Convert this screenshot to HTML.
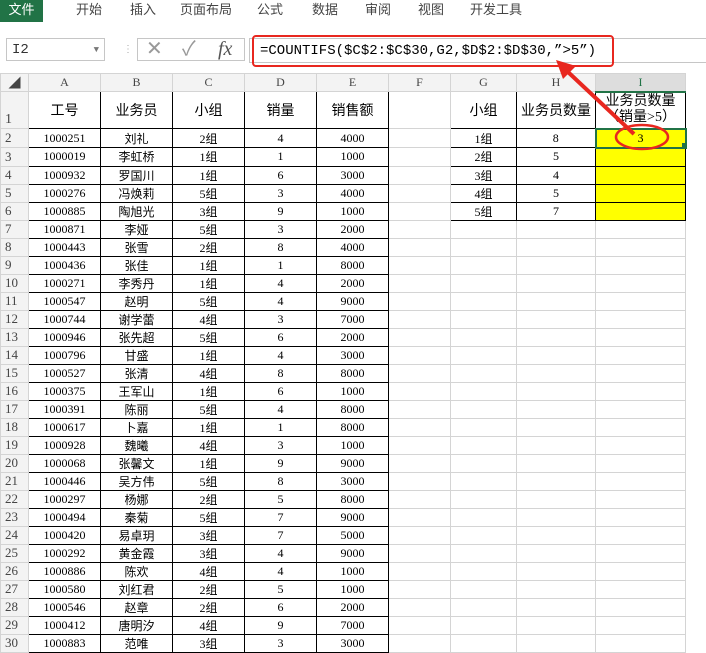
<!DOCTYPE html>
<html><head><meta charset="utf-8"><style>
body{margin:0;width:706px;height:653px;overflow:hidden;background:#fff;font-family:"Liberation Sans","Noto Sans CJK SC",sans-serif;position:relative}
.tab{position:absolute;top:0;height:22px;line-height:20px;font-size:13px;color:#444}
table{position:absolute;left:0;top:73px;width:718px;border-collapse:collapse;table-layout:fixed;font-family:"Liberation Serif","Noto Sans CJK SC",serif;font-size:12px}
td{border:1px solid #d4d4d4;height:17px;padding:0;text-align:center;white-space:nowrap;overflow:hidden;color:#000}
tr.h td{background:#f3f3f3;height:16px;color:#444;font-size:12px}
td.rn{background:#f3f3f3;color:#444;text-align:left;padding-left:4px;font-size:13px}
td.b{border:1px solid #000}
td.y{background:#ff0}
tr.r1 td{height:35px;font-size:14px}
</style></head><body>
<div class="tab" style="left:0;width:43px;background:#217346;color:#fff;text-align:center">文件</div>
<div class="tab" style="left:76px">开始</div>
<div class="tab" style="left:130px">插入</div>
<div class="tab" style="left:180px">页面布局</div>
<div class="tab" style="left:257px">公式</div>
<div class="tab" style="left:312px">数据</div>
<div class="tab" style="left:365px">审阅</div>
<div class="tab" style="left:418px">视图</div>
<div class="tab" style="left:470px">开发工具</div>
<div style="position:absolute;left:6px;top:38px;width:99px;height:23px;border:1px solid #c6c6c6;font:14px 'Liberation Mono',monospace;line-height:23px;padding-left:5px;box-sizing:border-box;color:#333">I2<span style="position:absolute;right:5px;font-size:9px;color:#777">▼</span></div>
<div style="position:absolute;top:44px;color:#aaa;font-size:10px;left:123px">⋮</div>
<div style="position:absolute;left:137px;top:38px;width:108px;height:23px;border:1px solid #c6c6c6;box-sizing:border-box;color:#999;font-size:20px;line-height:21px">
<span style="position:absolute;left:8px">✕</span><span style="position:absolute;left:44px">✓</span><span style="position:absolute;left:80px;font-family:'Liberation Serif',serif;font-style:italic;color:#555">fx</span></div>
<div style="position:absolute;left:249px;top:38px;width:457px;height:23px;border:1px solid #c6c6c6;border-right:none"></div>
<div style="position:absolute;left:252px;top:35px;width:352px;height:28px;border:2px solid #e8271f;border-radius:4px;font:14px 'Liberation Mono','Noto Sans CJK SC',monospace;line-height:28px;padding-left:6px;letter-spacing:0">=COUNTIFS($C$2:$C$30,G2,$D$2:$D$30,”>5”)</div>
<table>
<colgroup><col style="width:28px"><col style="width:72px"><col style="width:72px"><col style="width:72px"><col style="width:72px"><col style="width:72px"><col style="width:62px"><col style="width:66px"><col style="width:79px"><col style="width:90px"><col style="width:33px"></colgroup>
<tr class="h"><td>◢</td><td>A</td><td>B</td><td>C</td><td>D</td><td>E</td><td>F</td><td>G</td><td>H</td><td style="background:#ddd;border-bottom:2px solid #217346;color:#217346">I</td><td style="background:#fff;border:none"></td></tr>
<tr class="r1"><td class="rn" style="vertical-align:bottom">1</td><td class="b">工号</td><td class="b">业务员</td><td class="b">小组</td><td class="b">销量</td><td class="b">销售额</td><td></td><td class="b">小组</td><td class="b">业务员数量</td><td class="b" style="line-height:16px;white-space:normal">业务员数量（销量&gt;5）</td><td style="border:none"></td></tr>
<tr><td class="rn">2</td><td class="b">1000251</td><td class="b">刘礼</td><td class="b">2组</td><td class="b">4</td><td class="b">4000</td><td></td><td class="b">1组</td><td class="b">8</td><td class="b y" style="border:2px solid #217346">3</td><td style="border:none"></td></tr>
<tr><td class="rn">3</td><td class="b">1000019</td><td class="b">李虹桥</td><td class="b">1组</td><td class="b">1</td><td class="b">1000</td><td></td><td class="b">2组</td><td class="b">5</td><td class="b y"></td><td style="border:none"></td></tr>
<tr><td class="rn">4</td><td class="b">1000932</td><td class="b">罗国川</td><td class="b">1组</td><td class="b">6</td><td class="b">3000</td><td></td><td class="b">3组</td><td class="b">4</td><td class="b y"></td><td style="border:none"></td></tr>
<tr><td class="rn">5</td><td class="b">1000276</td><td class="b">冯焕莉</td><td class="b">5组</td><td class="b">3</td><td class="b">4000</td><td></td><td class="b">4组</td><td class="b">5</td><td class="b y"></td><td style="border:none"></td></tr>
<tr><td class="rn">6</td><td class="b">1000885</td><td class="b">陶旭光</td><td class="b">3组</td><td class="b">9</td><td class="b">1000</td><td></td><td class="b">5组</td><td class="b">7</td><td class="b y"></td><td style="border:none"></td></tr>
<tr><td class="rn">7</td><td class="b">1000871</td><td class="b">李娅</td><td class="b">5组</td><td class="b">3</td><td class="b">2000</td><td></td><td></td><td></td><td></td><td style="border:none"></td></tr>
<tr><td class="rn">8</td><td class="b">1000443</td><td class="b">张雪</td><td class="b">2组</td><td class="b">8</td><td class="b">4000</td><td></td><td></td><td></td><td></td><td style="border:none"></td></tr>
<tr><td class="rn">9</td><td class="b">1000436</td><td class="b">张佳</td><td class="b">1组</td><td class="b">1</td><td class="b">8000</td><td></td><td></td><td></td><td></td><td style="border:none"></td></tr>
<tr><td class="rn">10</td><td class="b">1000271</td><td class="b">李秀丹</td><td class="b">1组</td><td class="b">4</td><td class="b">2000</td><td></td><td></td><td></td><td></td><td style="border:none"></td></tr>
<tr><td class="rn">11</td><td class="b">1000547</td><td class="b">赵明</td><td class="b">5组</td><td class="b">4</td><td class="b">9000</td><td></td><td></td><td></td><td></td><td style="border:none"></td></tr>
<tr><td class="rn">12</td><td class="b">1000744</td><td class="b">谢学蕾</td><td class="b">4组</td><td class="b">3</td><td class="b">7000</td><td></td><td></td><td></td><td></td><td style="border:none"></td></tr>
<tr><td class="rn">13</td><td class="b">1000946</td><td class="b">张先超</td><td class="b">5组</td><td class="b">6</td><td class="b">2000</td><td></td><td></td><td></td><td></td><td style="border:none"></td></tr>
<tr><td class="rn">14</td><td class="b">1000796</td><td class="b">甘盛</td><td class="b">1组</td><td class="b">4</td><td class="b">3000</td><td></td><td></td><td></td><td></td><td style="border:none"></td></tr>
<tr><td class="rn">15</td><td class="b">1000527</td><td class="b">张清</td><td class="b">4组</td><td class="b">8</td><td class="b">8000</td><td></td><td></td><td></td><td></td><td style="border:none"></td></tr>
<tr><td class="rn">16</td><td class="b">1000375</td><td class="b">王军山</td><td class="b">1组</td><td class="b">6</td><td class="b">1000</td><td></td><td></td><td></td><td></td><td style="border:none"></td></tr>
<tr><td class="rn">17</td><td class="b">1000391</td><td class="b">陈丽</td><td class="b">5组</td><td class="b">4</td><td class="b">8000</td><td></td><td></td><td></td><td></td><td style="border:none"></td></tr>
<tr><td class="rn">18</td><td class="b">1000617</td><td class="b">卜嘉</td><td class="b">1组</td><td class="b">1</td><td class="b">8000</td><td></td><td></td><td></td><td></td><td style="border:none"></td></tr>
<tr><td class="rn">19</td><td class="b">1000928</td><td class="b">魏曦</td><td class="b">4组</td><td class="b">3</td><td class="b">1000</td><td></td><td></td><td></td><td></td><td style="border:none"></td></tr>
<tr><td class="rn">20</td><td class="b">1000068</td><td class="b">张馨文</td><td class="b">1组</td><td class="b">9</td><td class="b">9000</td><td></td><td></td><td></td><td></td><td style="border:none"></td></tr>
<tr><td class="rn">21</td><td class="b">1000446</td><td class="b">吴方伟</td><td class="b">5组</td><td class="b">8</td><td class="b">3000</td><td></td><td></td><td></td><td></td><td style="border:none"></td></tr>
<tr><td class="rn">22</td><td class="b">1000297</td><td class="b">杨娜</td><td class="b">2组</td><td class="b">5</td><td class="b">8000</td><td></td><td></td><td></td><td></td><td style="border:none"></td></tr>
<tr><td class="rn">23</td><td class="b">1000494</td><td class="b">秦菊</td><td class="b">5组</td><td class="b">7</td><td class="b">9000</td><td></td><td></td><td></td><td></td><td style="border:none"></td></tr>
<tr><td class="rn">24</td><td class="b">1000420</td><td class="b">易卓玥</td><td class="b">3组</td><td class="b">7</td><td class="b">5000</td><td></td><td></td><td></td><td></td><td style="border:none"></td></tr>
<tr><td class="rn">25</td><td class="b">1000292</td><td class="b">黄金霞</td><td class="b">3组</td><td class="b">4</td><td class="b">9000</td><td></td><td></td><td></td><td></td><td style="border:none"></td></tr>
<tr><td class="rn">26</td><td class="b">1000886</td><td class="b">陈欢</td><td class="b">4组</td><td class="b">4</td><td class="b">1000</td><td></td><td></td><td></td><td></td><td style="border:none"></td></tr>
<tr><td class="rn">27</td><td class="b">1000580</td><td class="b">刘红君</td><td class="b">2组</td><td class="b">5</td><td class="b">1000</td><td></td><td></td><td></td><td></td><td style="border:none"></td></tr>
<tr><td class="rn">28</td><td class="b">1000546</td><td class="b">赵章</td><td class="b">2组</td><td class="b">6</td><td class="b">2000</td><td></td><td></td><td></td><td></td><td style="border:none"></td></tr>
<tr><td class="rn">29</td><td class="b">1000412</td><td class="b">唐明汐</td><td class="b">4组</td><td class="b">9</td><td class="b">7000</td><td></td><td></td><td></td><td></td><td style="border:none"></td></tr>
<tr><td class="rn">30</td><td class="b">1000883</td><td class="b">范唯</td><td class="b">3组</td><td class="b">3</td><td class="b">3000</td><td></td><td></td><td></td><td></td><td style="border:none"></td></tr>
</table>
<svg style="position:absolute;left:0;top:0" width="706" height="653">
<line x1="634" y1="134" x2="568" y2="72" stroke="#e8271f" stroke-width="4"/>
<polygon points="556,60 576,66 563,79" fill="#e8271f"/>
<ellipse cx="642" cy="137" rx="26" ry="12" fill="none" stroke="#e8271f" stroke-width="2.5"/>
<rect x="682" y="143" width="5" height="5" fill="#217346"/>
</svg>
</body></html>
